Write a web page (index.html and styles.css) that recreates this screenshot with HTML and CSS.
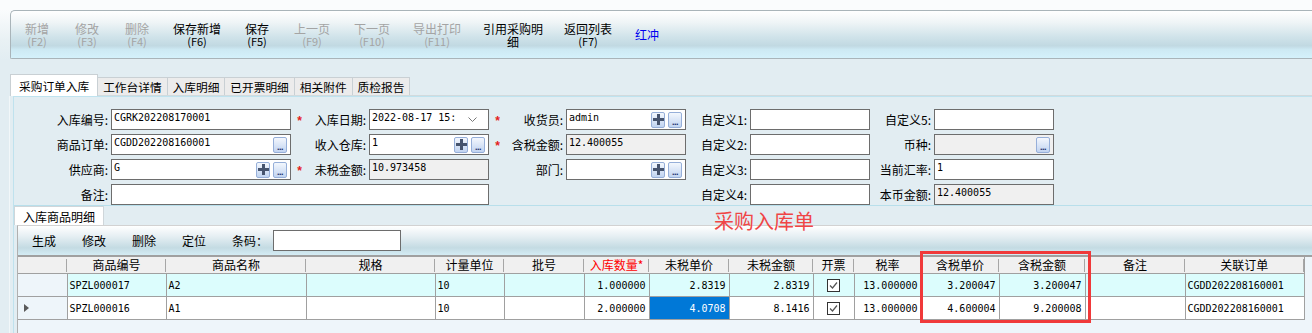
FILE: index.html
```html
<!DOCTYPE html>
<html>
<head>
<meta charset="utf-8">
<title>采购订单入库</title>
<link rel="stylesheet" href="styles.css">
</head>
<body>
	<div class="top">
		<div class="toolbar">
			<div class="tb-btn">新增<span class="key">(F2)</span></div>
			<div class="tb-btn">修改<span class="key">(F3)</span></div>
			<div class="tb-btn">删除<span class="key">(F4)</span></div>
			<div class="tb-btn on">保存新增<span class="key">(F6)</span></div>
			<div class="tb-btn on">保存<span class="key">(F5)</span></div>
			<div class="tb-btn">上一页<span class="key">(F9)</span></div>
			<div class="tb-btn">下一页<span class="key">(F10)</span></div>
			<div class="tb-btn">导出打印<span class="key">(F11)</span></div>
			<div class="tb-btn on"><span class="wrap">引用采购明细</span></div>
			<div class="tb-btn on">返回列表<span class="key">(F7)</span></div>
			<div class="tb-btn link">红冲</div>
		</div>
	</div>

	<div class="shell">
		<div class="tabs">
			<div class="tab active">采购订单入库</div>
			<div class="tab">工作台详情</div>
			<div class="tab">入库明细</div>
			<div class="tab">已开票明细</div>
			<div class="tab">相关附件</div>
			<div class="tab">质检报告</div>
		</div>

		<div class="tabframe">
		<div class="page">
			<div class="form">
				<!-- row 1 -->
				<label class="lbl">入库编号:</label>
				<div class="fld"><span class="val">CGRK202208170001</span></div>
				<span class="req">*</span>
				<label class="lbl">入库日期:</label>
				<div class="fld"><span class="val">2022-08-17 15:</span><svg class="chev" width="9" height="5" viewBox="0 0 9 5"><path d="M0.5 0.5 L4.5 4.5 L8.5 0.5" fill="none" stroke="#777" stroke-width="1"/></svg></div>
				<span class="req">*</span>
				<label class="lbl">收货员:</label>
				<div class="fld"><span class="val">admin</span><span class="ibtn"><svg width="11" height="11" viewBox="0 0 11 11"><path d="M5.5 0V11M0 5.5H11" stroke="#46546e" stroke-width="3"/></svg></span><span class="ibtn more">...</span></div>
				<label class="lbl">自定义1:</label>
				<div class="fld"></div>
				<label class="lbl">自定义5:</label>
				<div class="fld"></div>

				<!-- row 2 -->
				<label class="lbl">商品订单:</label>
				<div class="fld"><span class="val">CGDD202208160001</span><span class="ibtn more">...</span></div>
				<span></span>
				<label class="lbl">收入仓库:</label>
				<div class="fld"><span class="val">1</span><span class="ibtn"><svg width="11" height="11" viewBox="0 0 11 11"><path d="M5.5 0V11M0 5.5H11" stroke="#46546e" stroke-width="3"/></svg></span><span class="ibtn more">...</span></div>
				<span class="req">*</span>
				<label class="lbl">含税金额:</label>
				<div class="fld ro"><span class="val">12.400055</span></div>
				<label class="lbl">自定义2:</label>
				<div class="fld"></div>
				<label class="lbl">币种:</label>
				<div class="fld ro"><span class="val"></span><span class="ibtn more">...</span></div>

				<!-- row 3 -->
				<label class="lbl">供应商:</label>
				<div class="fld"><span class="val">G</span><span class="ibtn"><svg width="11" height="11" viewBox="0 0 11 11"><path d="M5.5 0V11M0 5.5H11" stroke="#46546e" stroke-width="3"/></svg></span><span class="ibtn more">...</span></div>
				<span class="req">*</span>
				<label class="lbl">未税金额:</label>
				<div class="fld ro"><span class="val">10.973458</span></div>
				<span></span>
				<label class="lbl">部门:</label>
				<div class="fld"><span class="val"></span><span class="ibtn"><svg width="11" height="11" viewBox="0 0 11 11"><path d="M5.5 0V11M0 5.5H11" stroke="#46546e" stroke-width="3"/></svg></span><span class="ibtn more">...</span></div>
				<label class="lbl">自定义3:</label>
				<div class="fld"></div>
				<label class="lbl">当前汇率:</label>
				<div class="fld"><span class="val">1</span></div>

				<!-- row 4 -->
				<label class="lbl">备注:</label>
				<div class="fld wide"></div>
				<label class="lbl col9">自定义4:</label>
				<div class="fld"></div>
				<label class="lbl">本币金额:</label>
				<div class="fld ro"><span class="val">12.400055</span></div>
			</div>

			<div class="subtabs">
				<div class="subtab">入库商品明细</div>
			</div>

			<div class="detail">
				<div class="gbar">
					<span>生成</span>
					<span>修改</span>
					<span>删除</span>
					<span>定位</span>
					<span class="code">条码：<span class="code-input"></span></span>
				</div>
				<div class="grid">
					<table>
						<colgroup>
							<col class="w49"><col class="w99"><col class="w140"><col class="w129"><col class="w69">
							<col class="w80"><col class="w65"><col class="w80"><col class="w84"><col class="w41">
							<col class="w67"><col class="w78"><col class="w86"><col class="w100"><col class="w119">
						</colgroup>
						<thead>
							<tr>
								<th></th><th>商品编号</th><th>商品名称</th><th>规格</th><th>计量单位</th>
								<th>批号</th><th class="must">入库数量*</th><th>未税单价</th><th>未税金额</th><th>开票</th>
								<th>税率</th><th>含税单价</th><th>含税金额</th><th>备注</th><th>关联订单</th>
							</tr>
						</thead>
						<tbody>
							<tr class="alt">
								<td class="rh"></td><td>SPZL000017</td><td>A2</td><td></td><td>10</td>
								<td></td><td class="num">1.000000</td><td class="num">2.8319</td><td class="num">2.8319</td>
								<td class="chk"><svg width="13" height="13" viewBox="0 0 13 13"><rect x="0.5" y="0.5" width="12" height="12" fill="#fff" stroke="#333"/><path d="M3 6.5 L5.5 9 L10 3.5" fill="none" stroke="#555" stroke-width="1.2"/></svg></td>
								<td class="num">13.000000</td><td class="num">3.200047</td><td class="num">3.200047</td><td></td><td>CGDD202208160001</td>
							</tr>
							<tr>
								<td class="rh"><svg width="5" height="8" viewBox="0 0 5 8"><path d="M0 0 L5 4 L0 8Z" fill="#5a5a5a"/></svg></td><td>SPZL000016</td><td>A1</td><td></td><td>10</td>
								<td></td><td class="num">2.000000</td><td class="num sel">4.0708</td><td class="num">8.1416</td>
								<td class="chk"><svg width="13" height="13" viewBox="0 0 13 13"><rect x="0.5" y="0.5" width="12" height="12" fill="#fff" stroke="#333"/><path d="M3 6.5 L5.5 9 L10 3.5" fill="none" stroke="#555" stroke-width="1.2"/></svg></td>
								<td class="num">13.000000</td><td class="num">4.600004</td><td class="num">9.200008</td><td></td><td>CGDD202208160001</td>
							</tr>
						</tbody>
					</table>
				</div>
			</div>
		</div>
		</div>
	</div>

	<div class="stamp">采购入库单</div>
	<div class="mark"></div>
</body>
</html>
```

FILE: styles.css
```css
body {
	margin: 0;
	width: 1312px;
	height: 333px;
	overflow: hidden;
	position: relative;
	background: #e2edf2;
	font-family: "Noto Sans CJK SC", "Noto Sans", sans-serif;
	font-size: 12px;
	color: #000;
}

/* top toolbar */
.top {
	padding-top: 10px;
	background: linear-gradient(#fafcfd 0, #fafcfd 10px, #e9f1f4 40px, #e2edf2 60px);
}
.toolbar {
	margin-left: 10px;
	height: 47px;
	border: 1px solid #a9b4b9;
	border-right: 0;
	border-radius: 5px 0 0 2px;
	padding-left: 1px;
	background: linear-gradient(#ffffff 0%, #eef4f6 25%, #d0e3ea 55%, #c1d9e2 74%, #cde9f3 82%, #d4f1fb 100%);
	display: grid;
	grid-template-columns: 50px 50px 50px 70px 50px 60px 60px 70px 82px 68px 50px;
	align-items: center;
}
.tb-btn {
	text-align: center;
	line-height: 13px;
	color: #a4a4a4;
}
.tb-btn .key {
	display: block;
	font-size: 11px;
	line-height: 12px;
}
.tb-btn.on {
	color: #000;
}
.tb-btn .wrap {
	display: inline-block;
	width: 62px;
}
.tb-btn.link {
	color: #0000f0;
}

/* tabs */
.shell {
	margin-left: 10px;
}
.tabs {
	display: flex;
	align-items: flex-end;
	height: 21px;
	margin-top: 15px;
	border-bottom: 1px solid #d2dadd;
}
.tab {
	height: 17px;
	line-height: 17px;
	padding: 0 5px;
	margin-left: -1px;
	border: 1px solid #c9d0d4;
	border-bottom: 0;
	background: #ececec;
	font-size: 11.7px;
}
.tab.active {
	height: 21px;
	line-height: 22px;
	padding: 0 8px;
	margin-left: 0;
	margin-bottom: -1px;
	background: #fff;
}
.tabframe {
	margin-left: -1px;
	border-left: 1px solid #f2f7f9;
}
.page {
	margin-left: 3px;
	border-left: 1px solid #bfe2ee;
	border-top: 1px solid #bfe3ef;
}

/* header form */
.form {
	display: grid;
	grid-template-columns: 97px 180px 17px 61px 120px 17px 60px 120px 64px 120px 64px 120px;
	grid-auto-rows: 21px;
	row-gap: 4px;
	padding-top: 12px;
	border-bottom: 1px solid #b8dfeb;
}
.lbl {
	text-align: right;
	padding-right: 3px;
	line-height: 21px;
	white-space: nowrap;
}
.lbl.col9 {
	grid-column: 9;
}
.req {
	color: #e41b1b;
	font: bold 12px/18px "Liberation Sans", sans-serif;
	padding-top: 3px;
	text-align: center;
}
.fld {
	box-sizing: border-box;
	height: 21px;
	border: 1px solid #6d6d6d;
	background: #fff;
	display: flex;
	align-items: center;
	padding: 0 3px 0 2px;
	font: 10px/12px "DejaVu Sans Mono", monospace;
}
.fld.ro {
	background: #f0f0f0;
}
.fld.wide {
	grid-column: span 4;
}
.val {
	flex: 1;
	align-self: flex-start;
	padding-top: 2px;
	white-space: nowrap;
}
.chev {
	margin-right: 8px;
}
.ibtn {
	flex: none;
	box-sizing: border-box;
	width: 14px;
	height: 16px;
	margin-left: 3px;
	border: 1px solid #96afd9;
	border-radius: 2px;
	background: linear-gradient(#f3f7fd, #c1d4f1);
	display: flex;
	align-items: center;
	justify-content: center;
}
.ibtn.more {
	align-items: flex-end;
	font: bold 9px/10px "Liberation Sans", sans-serif;
	color: #1d2c6b;
	letter-spacing: -0.5px;
}

/* detail section */
.subtabs {
	display: flex;
	height: 19px;
}
.subtab {
	padding: 0 8px;
	line-height: 19px;
	background: #fff;
	border: 1px solid #cfd6da;
	border-bottom: 0;
}
.detail {
	margin-left: 3px;
	border-top: 1px solid #d2d2d2;
	border-left: 1px solid #b0b0b0;
}
.gbar {
	height: 29px;
	padding-left: 14px;
	display: flex;
	align-items: center;
	gap: 26px;
	background: linear-gradient(#ffffff 0%, #e6eff3 35%, #c4dbe3 75%, #d4ecf4 100%);
}
.code {
	display: flex;
	align-items: center;
}
.code-input {
	box-sizing: border-box;
	width: 128px;
	height: 21px;
	margin-left: 5px;
	border: 1px solid #6d6d6d;
	background: #fff;
}
.grid {
	border-top: 2px solid #a0a0a0;
	background: #eef5fa;
	height: 76px;
	overflow: hidden;
}
.grid table {
	border-collapse: collapse;
	table-layout: fixed;
	width: 1286px;
}
.w49 { width: 49px; }
.w99 { width: 99px; }
.w140 { width: 140px; }
.w129 { width: 129px; }
.w69 { width: 69px; }
.w80 { width: 80px; }
.w65 { width: 65px; }
.w84 { width: 84px; }
.w41 { width: 41px; }
.w67 { width: 67px; }
.w78 { width: 78px; }
.w86 { width: 86px; }
.w100 { width: 100px; }
.w119 { width: 119px; }

.grid th {
	height: 16px;
	padding: 0;
	font-weight: normal;
	line-height: 16px;
	border-bottom: 1px solid #a0a0a0;
	background: linear-gradient(#a6a6a6, #a6a6a6) right 0 top 2px / 1px 13px no-repeat #f0f0f0;
}
.grid th:last-child {
	border-right: 1px solid #a0a0a0;
}
.grid th.must {
	color: #ff0000;
}
.grid tbody tr {
	height: 23px;
}
.grid td {
	padding: 0 2px;
	border: 1px solid #a0a0a0;
	background: #fff;
	font: 10px "DejaVu Sans Mono", monospace;
	white-space: nowrap;
	overflow: hidden;
}
.grid tr.alt td {
	background: #dcfdfd;
}
.grid td.rh,
.grid tr.alt td.rh {
	border-left: 0;
	background: #eef5fa;
	padding-left: 6px;
}
.grid td.num {
	text-align: right;
	padding-right: 3px;
}
.grid td.sel {
	background: #0078d7;
	color: #fff;
}
.grid td.chk {
	text-align: center;
	line-height: 0;
}

/* annotations */
.stamp {
	position: absolute;
	left: 714px;
	top: 210px;
	font-size: 20px;
	line-height: 22px;
	color: #f04545;
}
.mark {
	position: absolute;
	left: 920px;
	top: 251px;
	width: 171px;
	height: 72px;
	box-sizing: border-box;
	border: 3px solid #f0393a;
}
```
